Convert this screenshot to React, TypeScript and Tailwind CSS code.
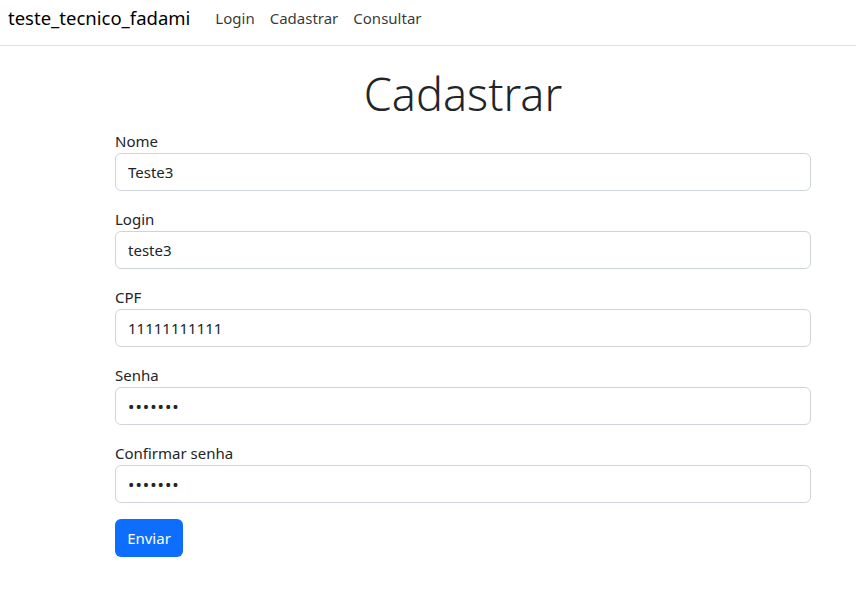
const fields = [
  { label: "Nome", value: "Teste3", type: "text" },
  { label: "Login", value: "teste3", type: "text" },
  { label: "CPF", value: "11111111111", type: "text" },
  { label: "Senha", value: "1234567", type: "password" },
  { label: "Confirmar senha", value: "1234567", type: "password" },
];

export default function App() {
  return (
    <div className="min-h-[595px] bg-white font-['Noto_Sans',sans-serif] text-[#212529]">
      <nav className="flex h-[46px] items-start border-b border-[#dee2e6] px-2 pt-[3px]">
        <span className="text-[18.5px] leading-[30px] text-black">teste_tecnico_fadami</span>
        <ul className="ml-[25px] flex gap-[15px] text-[15px] leading-[30px] text-black/80">
          <li>Login</li>
          <li>Cadastrar</li>
          <li>Consultar</li>
        </ul>
      </nav>

      <main className="ml-[115px] w-[696px]">
        <h1 className="mt-[16px] text-center text-[45px] font-light leading-[64px]">Cadastrar</h1>
        <form className="mt-[3px]">
          {fields.map((f) => (
            <div key={f.label} className="mb-4">
              <label className="block text-[15px] leading-6">{f.label}</label>
              <input
                type={f.type}
                defaultValue={f.value}
                readOnly
                className={`block h-[38px] w-full rounded-md border border-[#ced4da] px-3 text-[#212529] outline-none ${
                  f.type === "password" ? "text-[17px] tracking-[1px]" : "text-[15px]"
                }`}
              />
            </div>
          ))}
          <button
            type="button"
            className="h-[38px] w-[68px] rounded-md bg-[#0d6efd] text-[15px] text-white"
          >
            Enviar
          </button>
        </form>
      </main>
    </div>
  );
}
